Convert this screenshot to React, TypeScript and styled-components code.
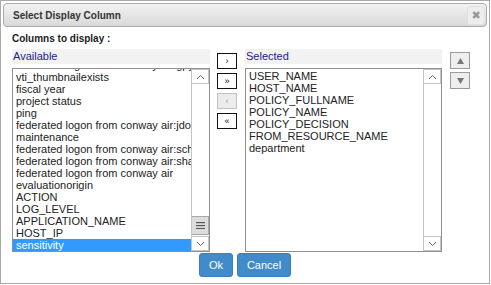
import styled, { createGlobalStyle } from 'styled-components'

const Global = createGlobalStyle`
  html, body {
    margin: 0;
    padding: 0;
    background: #fff;
  }
  body {
    font-family: "Liberation Sans", Arial, sans-serif;
    font-size: 11px;
    color: #222;
  }
`

const Dialog = styled.div`
  box-sizing: border-box;
  width: 490px;
  height: 284px;
  border: 1px solid #a9a9a9;
  padding: 2px;
  background: #fff;
  display: flex;
  flex-direction: column;
`

const TitleBar = styled.div`
  box-sizing: border-box;
  height: 24px;
  border: 1px solid #aaa;
  border-radius: 4px;
  background: linear-gradient(#f2f2f2, #d9d9d9);
  display: flex;
  align-items: center;
  justify-content: space-between;
  padding: 0 1px 0 9px;
`

const Title = styled.span`
  font-weight: 700;
  font-size: 10px;
  color: #333;
`

const CloseButton = styled.button`
  box-sizing: border-box;
  width: 18px;
  height: 19px;
  padding: 0;
  border: 1px solid #e0e0e0;
  border-radius: 3px;
  background: #ededed;
  color: #999;
  font-size: 11px;
  line-height: 17px;
  font-family: "DejaVu Sans", sans-serif;
`

const Body = styled.div`
  padding: 5px 0 0 9px;
  display: flex;
  flex-direction: column;
`

const Label = styled.div`
  font-weight: 700;
  font-size: 10px;
  line-height: 14px;
  color: #222;
`

const Columns = styled.div`
  display: flex;
  align-items: flex-start;
  margin-top: 3px;
`

const Column = styled.div<{ $width: number }>`
  width: ${(p) => p.$width}px;
  display: flex;
  flex-direction: column;
`

const Header = styled.div`
  height: 15px;
  line-height: 15px;
  padding-left: 1px;
  background: #f2f2f2;
  color: #1c1c8c;
`

const ListBox = styled.div`
  box-sizing: border-box;
  margin-top: 4px;
  height: 184px;
  border: 1px solid #8f8f8f;
  display: flex;
  background: #fff;
`

const Items = styled.div`
  flex: 1;
  overflow: hidden;
`

const ItemsInner = styled.div<{ $offset: number }>`
  margin-top: ${(p) => -p.$offset}px;
`

const Item = styled.div<{ $selected?: boolean }>`
  height: 12px;
  line-height: 12px;
  padding-left: 3px;
  white-space: nowrap;
  overflow: hidden;
  color: ${(p) => (p.$selected ? '#fff' : '#222')};
  background: ${(p) => (p.$selected ? '#3399ff' : 'transparent')};
`

const ScrollBar = styled.div`
  width: 17px;
  display: flex;
  flex-direction: column;
  border-left: 1px solid #c4c4c4;
`

const ArrowBox = styled.div`
  box-sizing: border-box;
  height: 15px;
  display: flex;
  align-items: center;
  justify-content: center;
  border: 1px solid #c4c4c4;
  border-left: 0;
  background: #fff;
`

const Track = styled.div`
  flex: 1;
  display: flex;
  flex-direction: column;
  justify-content: flex-end;
`

const Thumb = styled.div`
  box-sizing: border-box;
  height: 19px;
  margin-bottom: 1px;
  border: 1px solid #a8a8a8;
  border-left: 0;
  background: #dcdcdc;
  display: flex;
  align-items: center;
  justify-content: center;
`

const MoveColumn = styled.div`
  width: 20px;
  margin: 0 8px 0 7px;
  padding-top: 4px;
  display: flex;
  flex-direction: column;
  gap: 4px;
`

const MoveButton = styled.button<{ $disabled?: boolean }>`
  box-sizing: border-box;
  width: 20px;
  height: 16px;
  padding: 0;
  border: 1px solid ${(p) => (p.$disabled ? '#c2c2c2' : '#111')};
  background: ${(p) => (p.$disabled ? '#ececec' : '#fff')};
  color: ${(p) => (p.$disabled ? '#999' : '#111')};
  font-family: "Liberation Sans", Arial, sans-serif;
  font-size: 9px;
  line-height: 13px;
`

const OrderColumn = styled.div`
  width: 20px;
  margin-left: 8px;
  padding-top: 3px;
  display: flex;
  flex-direction: column;
  gap: 3px;
`

const OrderButton = styled.button`
  box-sizing: border-box;
  width: 20px;
  height: 17px;
  padding: 0;
  border: 1px solid #9a9a9a;
  background: #ededed;
  display: flex;
  align-items: center;
  justify-content: center;
`

const Footer = styled.div`
  display: flex;
  justify-content: center;
  gap: 4px;
  margin-top: 1px;
  padding-right: 9px;
`

const ActionButton = styled.button<{ $width: number }>`
  box-sizing: border-box;
  width: ${(p) => p.$width}px;
  height: 24px;
  padding: 0;
  border: 1px solid #3a7fbf;
  border-radius: 3px;
  background: #428bca;
  color: #fff;
  font-family: "Liberation Sans", Arial, sans-serif;
  font-size: 11px;
`

const available = [
  'federated logon from conway air:gpy',
  'vti_thumbnailexists',
  'fiscal year',
  'project status',
  'ping',
  'federated logon from conway air:jdoe',
  'maintenance',
  'federated logon from conway air:schmidt',
  'federated logon from conway air:sharon',
  'federated logon from conway air',
  'evaluationorigin',
  'ACTION',
  'LOG_LEVEL',
  'APPLICATION_NAME',
  'HOST_IP',
  'sensitivity',
]

const selected = [
  'USER_NAME',
  'HOST_NAME',
  'POLICY_FULLNAME',
  'POLICY_NAME',
  'POLICY_DECISION',
  'FROM_RESOURCE_NAME',
  'department',
]

function Chevron({ up }: { up?: boolean }) {
  return (
    <svg width="9" height="6" viewBox="0 0 9 6">
      <polyline
        points={up ? '1,5 4.5,1.5 8,5' : '1,1 4.5,4.5 8,1'}
        fill="none"
        stroke="#666"
        strokeWidth="1"
      />
    </svg>
  )
}

function Grip() {
  return (
    <svg width="9" height="7" viewBox="0 0 9 7">
      <rect x="0" y="0" width="9" height="1.2" fill="#555" />
      <rect x="0" y="3" width="9" height="1.2" fill="#555" />
      <rect x="0" y="6" width="9" height="1.2" fill="#555" />
    </svg>
  )
}

function Triangle({ up }: { up?: boolean }) {
  return (
    <svg width="7" height="6" viewBox="0 0 7 6">
      <polygon points={up ? '3.5,0 7,6 0,6' : '0,0 7,0 3.5,6'} fill="#777" />
    </svg>
  )
}

function Scroll({ thumb }: { thumb?: boolean }) {
  return (
    <ScrollBar>
      <ArrowBox>
        <Chevron up />
      </ArrowBox>
      <Track>
        {thumb && (
          <Thumb>
            <Grip />
          </Thumb>
        )}
      </Track>
      <ArrowBox>
        <Chevron />
      </ArrowBox>
    </ScrollBar>
  )
}

export default function App() {
  return (
    <>
      <Global />
      <Dialog>
        <TitleBar>
          <Title>Select Display Column</Title>
          <CloseButton aria-label="Close">✖</CloseButton>
        </TitleBar>
        <Body>
          <Label>Columns to display :</Label>
          <Columns>
            <Column $width={198}>
              <Header>Available</Header>
              <ListBox>
                <Items>
                  <ItemsInner $offset={10}>
                    {available.map((name) => (
                      <Item key={name} $selected={name === 'sensitivity'}>
                        {name}
                      </Item>
                    ))}
                  </ItemsInner>
                </Items>
                <Scroll thumb />
              </ListBox>
            </Column>
            <MoveColumn>
              <MoveButton>›</MoveButton>
              <MoveButton>»</MoveButton>
              <MoveButton $disabled>‹</MoveButton>
              <MoveButton>«</MoveButton>
            </MoveColumn>
            <Column $width={197}>
              <Header>Selected</Header>
              <ListBox>
                <Items>
                  <ItemsInner $offset={-1}>
                    {selected.map((name) => (
                      <Item key={name}>{name}</Item>
                    ))}
                  </ItemsInner>
                </Items>
                <Scroll />
              </ListBox>
            </Column>
            <OrderColumn>
              <OrderButton aria-label="Move up">
                <Triangle up />
              </OrderButton>
              <OrderButton aria-label="Move down">
                <Triangle />
              </OrderButton>
            </OrderColumn>
          </Columns>
          <Footer>
            <ActionButton $width={34}>Ok</ActionButton>
            <ActionButton $width={54}>Cancel</ActionButton>
          </Footer>
        </Body>
      </Dialog>
    </>
  )
}
